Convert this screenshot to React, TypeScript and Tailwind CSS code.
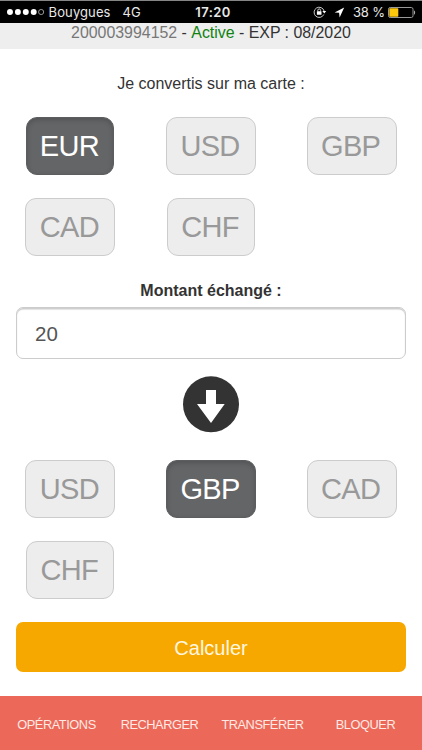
import React from "react";

type Currency = { code: string; width: string; active?: boolean };

const source: Currency[] = [
  { code: "EUR", width: "w-[88px]", active: true },
  { code: "USD", width: "w-[90px]" },
  { code: "GBP", width: "w-[90px]" },
  { code: "CAD", width: "w-[90px]" },
  { code: "CHF", width: "w-[88px]" },
];

const target: Currency[] = [
  { code: "USD", width: "w-[90px]" },
  { code: "GBP", width: "w-[90px]", active: true },
  { code: "CAD", width: "w-[90px]" },
  { code: "CHF", width: "w-[88px]" },
];

function CurrencyGrid({ items }: { items: Currency[] }) {
  return (
    <div className="grid grid-cols-3 justify-items-center gap-y-[22.5px]">
      {items.map((c) => (
        <button
          key={c.code}
          className={`flex h-[58.5px] items-center justify-center rounded-[11px] border pr-[2px] pt-[2px] text-[29px] leading-none tracking-[-0.7px] ${c.width} ${
            c.active
              ? "border-[#5c5d5f] bg-[#646567] text-white shadow-[inset_0_2px_5px_rgba(0,0,0,0.18)]"
              : "border-[#cccccc] bg-[#ededed] text-[#999999]"
          }`}
        >
          {c.code}
        </button>
      ))}
    </div>
  );
}

function StatusBar() {
  return (
    <div className="grid h-[23px] grid-cols-3 items-center border-t border-[#858585] bg-black font-[Inter,sans-serif] text-[13px] leading-none text-[#e8e8e8]">
      <div className="flex items-center pl-[7px]">
        <svg width="38" height="8" viewBox="0 0 38 8" fill="#fff">
          <circle cx="3" cy="4" r="3" />
          <circle cx="11" cy="4" r="3" />
          <circle cx="19" cy="4" r="3" />
          <circle cx="27" cy="4" r="3" />
          <circle cx="34.5" cy="4" r="2.6" fill="none" stroke="#bbb" strokeWidth="0.8" />
        </svg>
        <span className="ml-[4px] tracking-[0.1px]">Bouygues</span>
        <span className="ml-[12px]">4G</span>
      </div>
      <div className="pl-1 text-center font-semibold tracking-[0.4px]">17:20</div>
      <div className="flex items-center justify-end pr-[6px]">
        <svg width="14" height="12" viewBox="0 0 14 12" fill="none">
          <path d="M10.8 8.5A5.1 5.1 0 1 1 11.1 5" stroke="#ddd" strokeWidth="0.9" />
          <path d="M9.4 5h3.8l-1.9 2.5z" fill="#fff" />
          <rect x="3.9" y="5.3" width="4.6" height="3.5" rx="0.4" fill="#fff" />
          <path d="M4.8 5.5V4.3a1.4 1.4 0 0 1 2.8 0v1.2" stroke="#fff" strokeWidth="0.8" />
        </svg>
        <svg className="ml-[7px]" width="11" height="11" viewBox="0 0 11 11" fill="#fff">
          <path d="M10.2.5.6 5.4l4.5.4.5 4.6z" />
        </svg>
        <span className="ml-[8px] whitespace-nowrap tracking-[-0.1px]">38 %</span>
        <svg className="ml-[3px]" width="28" height="11" viewBox="0 0 28 11" fill="none">
          <rect x="0.5" y="0.5" width="24.5" height="10" rx="1.7" stroke="#999" />
          <rect x="1.3" y="1.3" width="9" height="8.4" rx="0.7" fill="#fdc70c" />
          <path d="M26 3.4c1.5.2 1.5 4 0 4.2z" fill="#aaa" />
        </svg>
      </div>
    </div>
  );
}

export default function App() {
  return (
    <div className="flex h-[750px] w-full flex-col overflow-hidden bg-white font-['Liberation_Sans',Arial,sans-serif] text-[#333333]">
      <StatusBar />
      <header className="flex h-[26px] justify-center whitespace-pre bg-[#eeeeee] text-[15.9px] leading-[19px]">
        <span className="text-[#777777]">200003994152</span>
        <span> - </span>
        <span className="text-[#108310]">Active</span>
        <span> - EXP : 08/2020</span>
      </header>
      <main className="flex flex-1 flex-col">
        <p className="mt-[25px] h-5 text-center text-[16px] leading-5">Je convertis sur ma carte :</p>
        <div className="mt-[22.5px]">
          <CurrencyGrid items={source} />
        </div>
        <label className="mt-[25px] block h-5 text-center text-[16px] font-bold leading-5">Montant échangé :</label>
        <div className="mx-4 mt-[6px] flex h-[52px] items-center rounded-[7px] border border-[#cccccc] bg-white pl-[18px] pt-[2px] text-[20.5px] text-[#555555] shadow-[inset_0_1.5px_1px_rgba(0,0,0,0.2)]">
          20
        </div>
        <svg className="mt-[17px] self-center" width="56" height="57" viewBox="0 0 56 57">
          <circle cx="28" cy="28.3" r="28" fill="#333" />
          <path d="M23 14h10v14h8.7L28 47 14 28h9z" fill="#fff" />
        </svg>
        <div className="mt-[26.5px]">
          <CurrencyGrid items={target} />
        </div>
        <button className="mx-4 mt-[22.5px] h-[50.5px] rounded-[7px] bg-[#f7a800] pt-[2px] text-[20px] text-[#fff7e0]">Calculer</button>
      </main>
      <nav className="grid h-[54px] grid-cols-4 items-center bg-[#ec6858] px-[5px] pt-[3px] text-center text-[12.8px] tracking-[-0.45px] text-[#ffe9e4]">
        <span>OPÉRATIONS</span>
        <span>RECHARGER</span>
        <span>TRANSFÉRER</span>
        <span>BLOQUER</span>
      </nav>
    </div>
  );
}
